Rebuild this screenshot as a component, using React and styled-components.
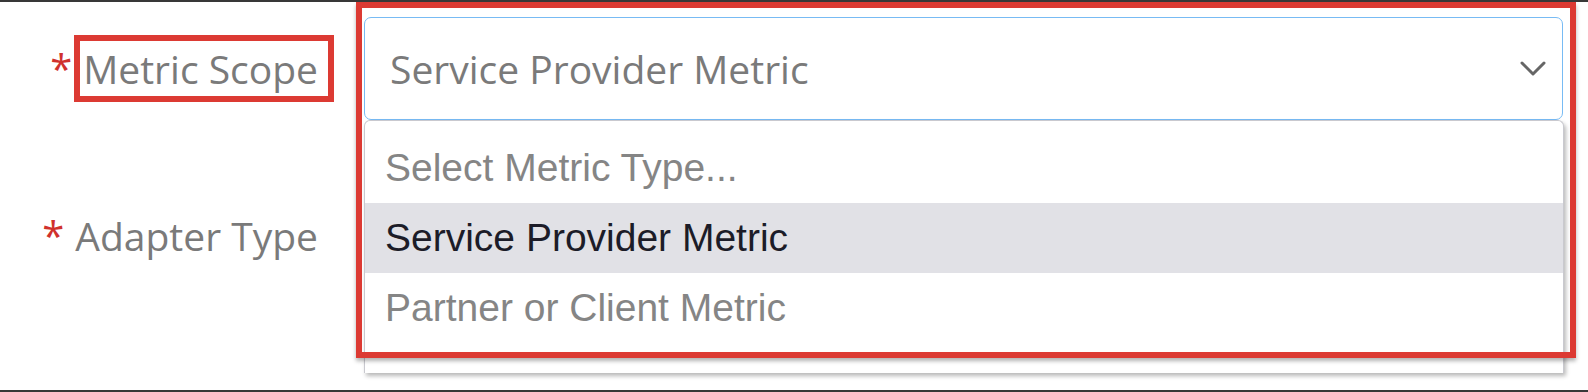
import styled, { createGlobalStyle } from "styled-components";

const GlobalStyle = createGlobalStyle`
  html, body {
    margin: 0;
    padding: 0;
    background: #ffffff;
  }
`;

const Frame = styled.div`
  height: 392px;
  box-sizing: border-box;
  border-top: 2px solid #383838;
  border-bottom: 2px solid #383838;
  background: #ffffff;
  overflow: hidden;
`;

const Form = styled.div`
  display: grid;
  grid-template-columns: 364px 1199px;
  grid-auto-rows: auto;
  row-gap: 64px;
  padding-top: 15px;
`;

const LabelCell = styled.div`
  display: flex;
  align-items: center;
  justify-content: flex-end;
  padding-right: 46px;
  font-family: "Open Sans", "Liberation Sans", sans-serif;
  font-size: 39px;
  color: #7a7a7a;
`;

const Asterisk = styled.span`
  color: #d0312d;
  margin-right: 11px;
  font-size: 40px;
`;

const LabelText = styled.span`
  white-space: nowrap;
  ${(p) =>
    p.$marked &&
    `
    padding: 1px 10px 1px 3px;
    margin: -1px -10px -1px -3px;
    outline: 6px solid #dc3a33;
  `}
`;

const Field = styled.div`
  position: relative;
  height: 103px;
`;

const Select = styled.div`
  box-sizing: border-box;
  height: 103px;
  display: flex;
  align-items: center;
  justify-content: space-between;
  padding: 0 16px 0 25px;
  border: 1.5px solid ${(p) => (p.$focused ? "#78bbf4" : "#d2d2d8")};
  border-radius: 7px;
  background: #ffffff;
  font-family: "Open Sans", "Liberation Sans", sans-serif;
  font-size: 39px;
  color: #7a7a7a;
`;

const Menu = styled.ul`
  position: absolute;
  left: 0;
  right: -1px;
  top: 103px;
  height: 253px;
  box-sizing: border-box;
  margin: 0;
  padding: 12px 0 0;
  list-style: none;
  background: #ffffff;
  border: 1px solid #c9c9cf;
  border-bottom: none;
  border-radius: 6px 6px 0 0;
  box-shadow: 2px 3px 4px rgba(0, 0, 0, 0.28);
  z-index: 2;
`;

const Option = styled.li`
  height: 70px;
  display: flex;
  align-items: center;
  padding-left: 20px;
  font-family: "Liberation Sans", Arial, sans-serif;
  font-size: 39px;
  color: ${(p) => (p.$active ? "#1c1c28" : "#858585")};
  background: ${(p) => (p.$active ? "#e1e1e6" : "transparent")};
`;

const Mark = styled.div`
  position: absolute;
  left: -8px;
  top: -15px;
  right: -13px;
  height: 356px;
  box-sizing: border-box;
  border: 6px solid #dc3a33;
  box-shadow: 0 3px 4px rgba(0, 0, 0, 0.3);
  pointer-events: none;
  z-index: 3;
`;

const Chevron = () => (
  <svg width="26" height="16" viewBox="0 0 26 16" fill="none">
    <path d="M2 2l11 11L24 2" stroke="#666" strokeWidth="3" strokeLinecap="round" strokeLinejoin="round" />
  </svg>
);

const options = [
  { label: "Select Metric Type..." },
  { label: "Service Provider Metric", active: true },
  { label: "Partner or Client Metric" },
];

export default function App() {
  return (
    <>
      <GlobalStyle />
      <Frame>
        <Form>
          <LabelCell>
            <Asterisk>*</Asterisk>
            <LabelText $marked>Metric Scope</LabelText>
          </LabelCell>
          <Field>
            <Select $focused>
              <span>Service Provider Metric</span>
              <Chevron />
            </Select>
            <Menu>
              {options.map((o) => (
                <Option key={o.label} $active={o.active}>
                  {o.label}
                </Option>
              ))}
            </Menu>
            <Mark />
          </Field>

          <LabelCell>
            <Asterisk>*</Asterisk>
            <LabelText>Adapter Type</LabelText>
          </LabelCell>
          <Field>
            <Select>
              <span />
              <Chevron />
            </Select>
          </Field>
        </Form>
      </Frame>
    </>
  );
}
